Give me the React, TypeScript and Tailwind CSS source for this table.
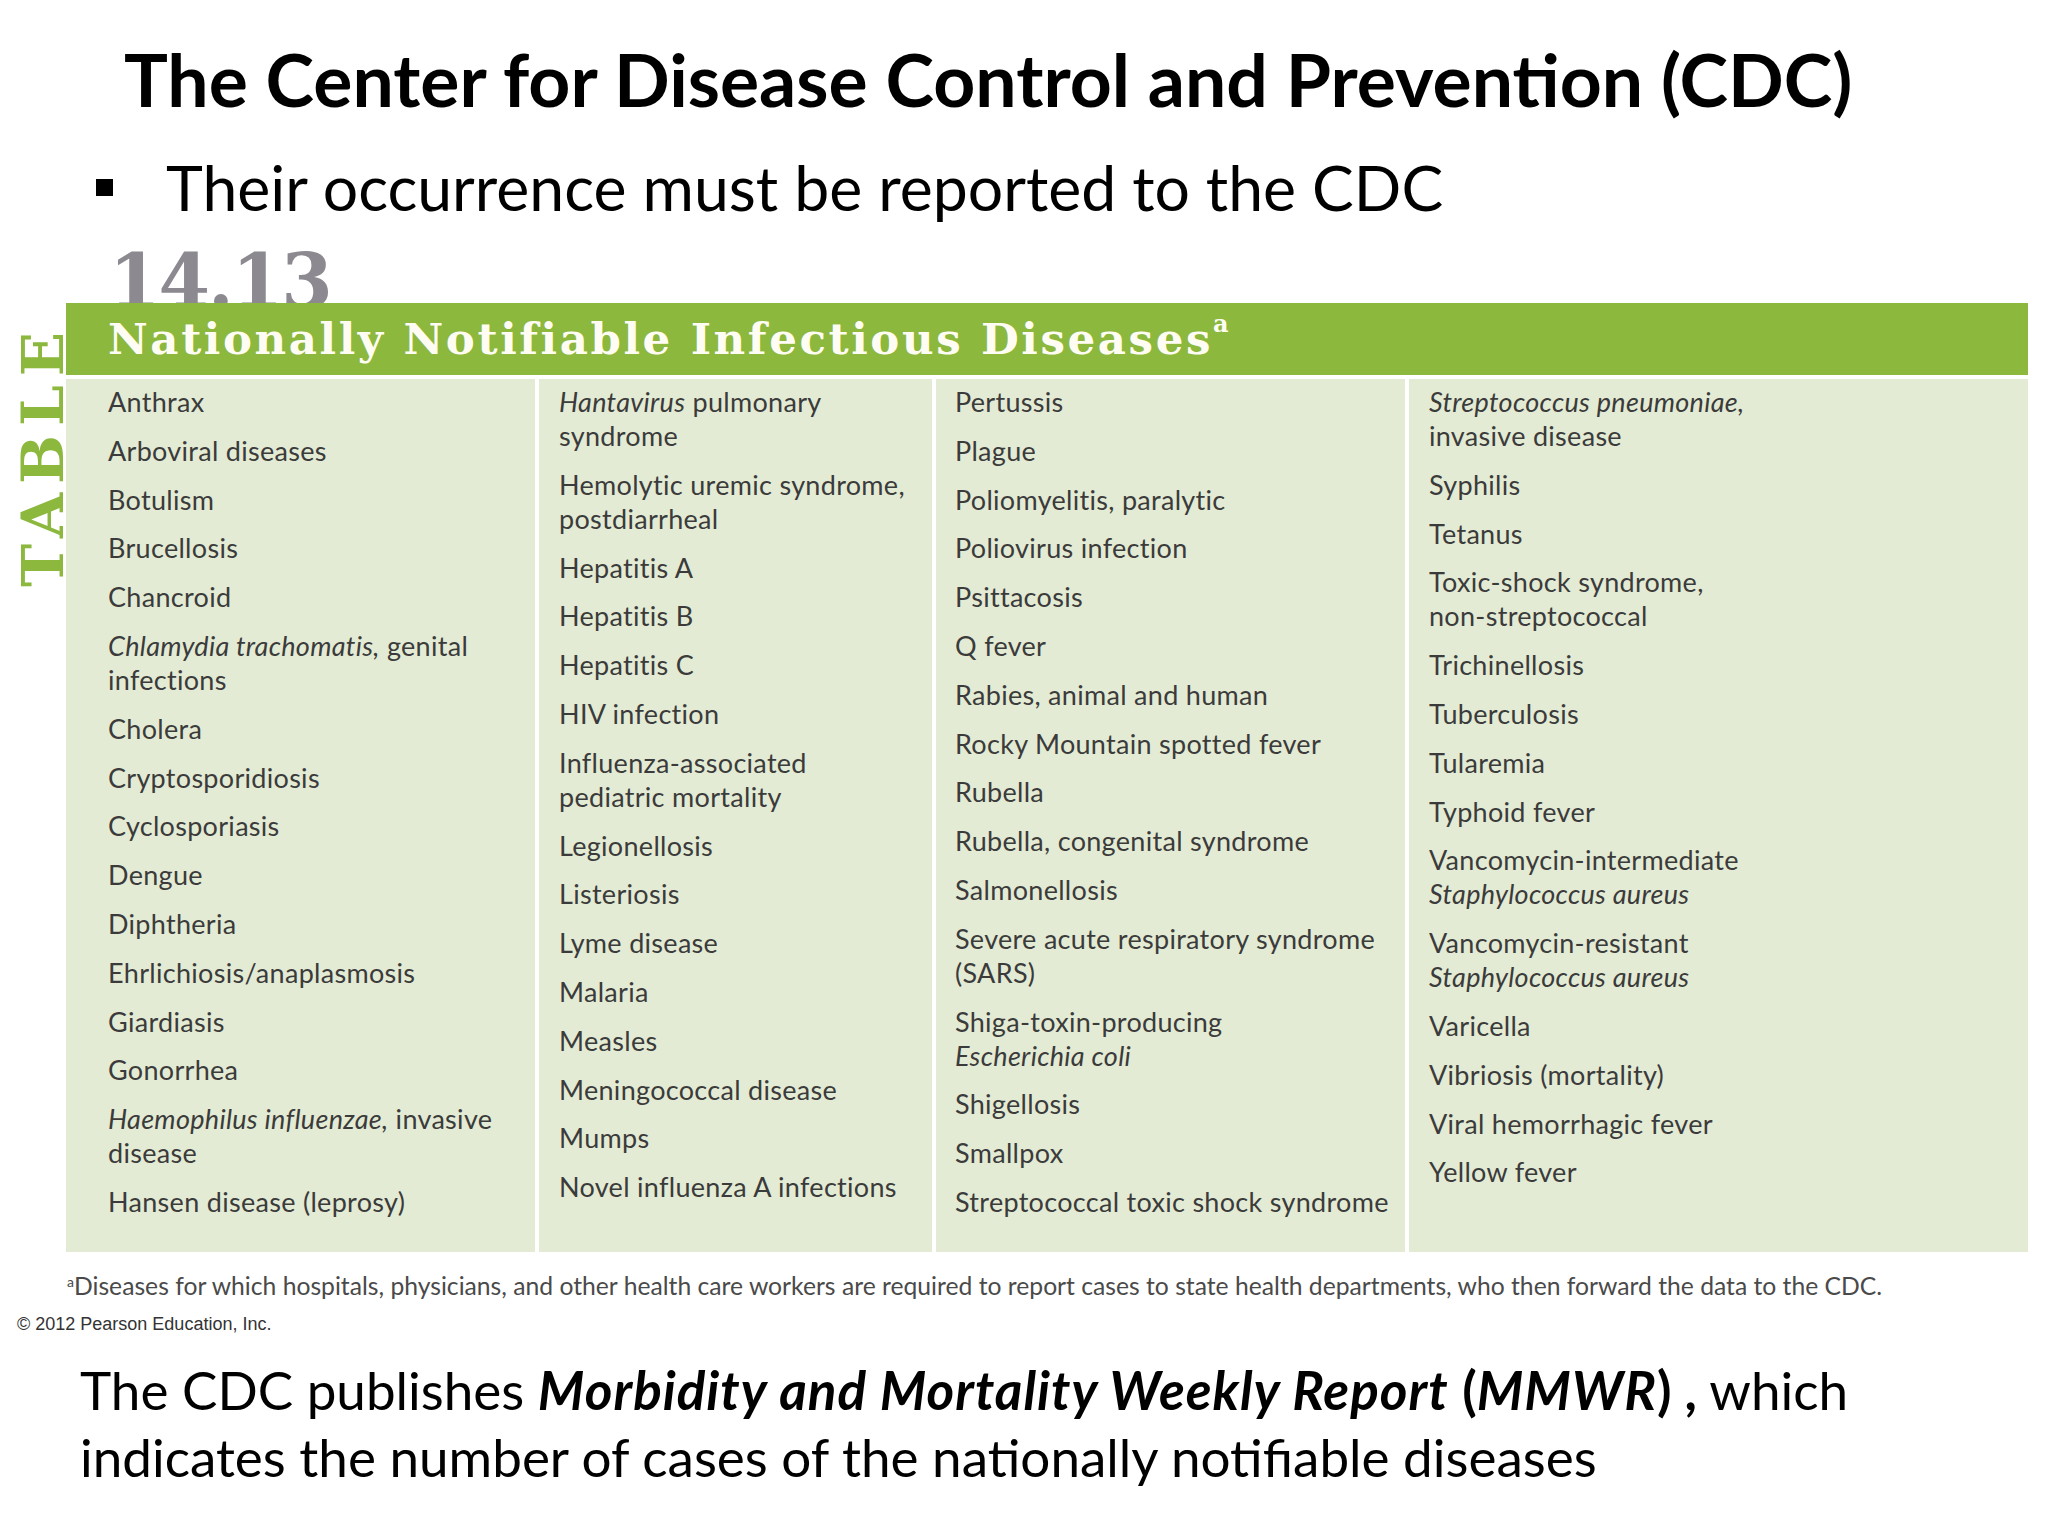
import type { ReactNode } from "react";

type Item = ReactNode[];

const COL1: Item[] = [
  ["Anthrax"],
  ["Arboviral diseases"],
  ["Botulism"],
  ["Brucellosis"],
  ["Chancroid"],
  [<><i>Chlamydia trachomatis,</i> genital</>, "infections"],
  ["Cholera"],
  ["Cryptosporidiosis"],
  ["Cyclosporiasis"],
  ["Dengue"],
  ["Diphtheria"],
  ["Ehrlichiosis/anaplasmosis"],
  ["Giardiasis"],
  ["Gonorrhea"],
  [<><i>Haemophilus influenzae,</i> invasive</>, "disease"],
  ["Hansen disease (leprosy)"],
];

const COL2: Item[] = [
  [<><i>Hantavirus</i> pulmonary</>, "syndrome"],
  ["Hemolytic uremic syndrome,", "postdiarrheal"],
  ["Hepatitis A"],
  ["Hepatitis B"],
  ["Hepatitis C"],
  ["HIV infection"],
  ["Influenza-associated", "pediatric mortality"],
  ["Legionellosis"],
  ["Listeriosis"],
  ["Lyme disease"],
  ["Malaria"],
  ["Measles"],
  ["Meningococcal disease"],
  ["Mumps"],
  ["Novel influenza A infections"],
];

const COL3: Item[] = [
  ["Pertussis"],
  ["Plague"],
  ["Poliomyelitis, paralytic"],
  ["Poliovirus infection"],
  ["Psittacosis"],
  ["Q fever"],
  ["Rabies, animal and human"],
  ["Rocky Mountain spotted fever"],
  ["Rubella"],
  ["Rubella, congenital syndrome"],
  ["Salmonellosis"],
  ["Severe acute respiratory syndrome", "(SARS)"],
  ["Shiga-toxin-producing", <i>Escherichia coli</i>],
  ["Shigellosis"],
  ["Smallpox"],
  ["Streptococcal toxic shock syndrome"],
];

const COL4: Item[] = [
  [<i>Streptococcus pneumoniae,</i>, "invasive disease"],
  ["Syphilis"],
  ["Tetanus"],
  ["Toxic-shock syndrome,", "non-streptococcal"],
  ["Trichinellosis"],
  ["Tuberculosis"],
  ["Tularemia"],
  ["Typhoid fever"],
  ["Vancomycin-intermediate", <i>Staphylococcus aureus</i>],
  ["Vancomycin-resistant", <i>Staphylococcus aureus</i>],
  ["Varicella"],
  ["Vibriosis (mortality)"],
  ["Viral hemorrhagic fever"],
  ["Yellow fever"],
];

function Column({ items, pad }: { items: Item[]; pad: string }) {
  return (
    <div className={`flex flex-col gap-[14.8px] bg-[#e4ebd4] pt-[6px] ${pad}`}>
      {items.map((lines, i) => (
        <div key={i}>
          {lines.map((line, j) => (
            <div key={j} className="whitespace-nowrap">
              {line}
            </div>
          ))}
        </div>
      ))}
    </div>
  );
}

export default function App() {
  return (
    <div className="relative h-[1536px] w-[2048px] overflow-hidden bg-white font-['Lato',sans-serif] text-black">
      {/* Title */}
      <h1 className="pl-[124px] pt-[43px] text-[73.3px] font-bold leading-[72px]">
        The Center for Disease Control and Prevention (CDC)
      </h1>

      {/* Bullet */}
      <div className="mt-[41px] flex items-start">
        <div className="ml-[96px] mt-[23px] h-[17px] w-[17px] bg-black" />
        <p className="ml-[53px] text-[62.5px] leading-[61px]">
          Their occurrence must be reported to the CDC
        </p>
      </div>

      {/* Table number, partly hidden under the header bar */}
      <div className="mt-[31px] h-[55px] overflow-hidden pl-[109px]">
        <div className="mt-[-4px] font-['DejaVu_Serif',serif] text-[74px] font-bold leading-[74px] tracking-[-2px] text-[#8c8a90]">
          14.13
        </div>
      </div>

      {/* Table */}
      <div className="flex">
        <div className="w-[66px] pt-[20px]">
          <div className="ml-[19px] rotate-180 font-['DejaVu_Serif',serif] text-[58px] font-bold leading-[48px] tracking-[9px] text-[#8cb83e] [writing-mode:vertical-rl]">
            TABLE
          </div>
        </div>
        <div className="flex w-[1962px] flex-col gap-[4px] bg-white">
          <div className="h-[72px] bg-[#8cb83e] pl-[42px] font-['DejaVu_Serif',serif] text-[43.5px] font-bold leading-[72px] tracking-[2.6px] text-[#fffdf3]">
            Nationally Notifiable Infectious Diseases
            <sup className="top-[-22px] text-[24px] tracking-normal">a</sup>
          </div>
          <div className="grid h-[873px] grid-cols-[469px_393px_469px_619px] gap-[4px] text-[27px] leading-[34px] tracking-[0.3px] text-[#3b3b3b]">
            <Column items={COL1} pad="pl-[42px]" />
            <Column items={COL2} pad="pl-[20px]" />
            <Column items={COL3} pad="pl-[19px]" />
            <Column items={COL4} pad="pl-[20px]" />
          </div>
        </div>
      </div>

      {/* Footnote */}
      <p className="mt-[20px] whitespace-nowrap pl-[67px] text-[24.7px] leading-[28px] text-[#4a4a4a]">
        <sup className="top-[-8px] text-[14px]">a</sup>
        Diseases for which hospitals, physicians, and other health care workers are required to report cases to
        state health departments, who then forward the data to the CDC.
      </p>

      {/* Copyright */}
      <p className="mt-[14px] pl-[17px] font-['Liberation_Sans',sans-serif] text-[18px] leading-[20px] text-[#333]">
        © 2012 Pearson Education, Inc.
      </p>

      {/* Bottom text */}
      <p className="mt-[22px] pl-[80px] text-[53px] leading-[67px]">
        The CDC publishes{" "}
        <b className="italic tracking-[1px]">Morbidity and Mortality Weekly Report</b> <b>(</b>
        <b className="italic tracking-[1px]">MMWR</b>
        <b>) ,</b> which
        <br />
        indicates the number of cases of the nationally notifiable diseases
      </p>
    </div>
  );
}
